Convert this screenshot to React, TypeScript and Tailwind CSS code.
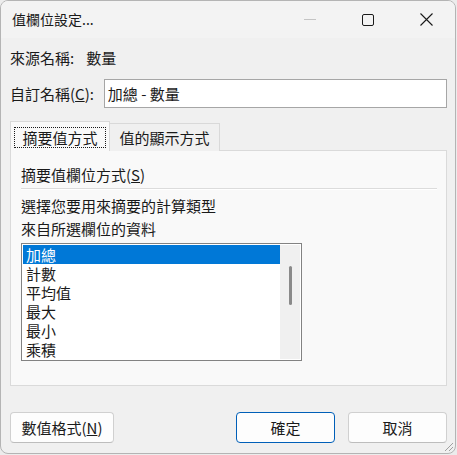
import React from "react";

const font = { fontFamily: '"Noto Sans CJK TC", "Noto Sans", sans-serif' };

export default function App() {
  const items = ["加總", "計數", "平均值", "最大", "最小", "乘積"];
  return (
    <div className="w-[457px] h-[455px] bg-[#ececec] overflow-hidden" style={font}>
      <div className="relative w-[456px] h-[454px] rounded-[8px] border border-[#b4b4b4] bg-[#f0f0f0] flex flex-col text-[#1a1a1a] overflow-hidden">
        {/* Title bar */}
        <div className="h-[37px] shrink-0 bg-[#f3f3f3] flex items-center">
          <div className="pl-[11px] text-[14px] leading-[19px]">值欄位設定...</div>
          <div className="ml-auto flex h-full">
            <div className="w-[58px] h-full flex items-center justify-center">
              <div className="w-[12px] h-px bg-[#c4c4c4]" />
            </div>
            <div className="w-[58px] h-full flex items-center justify-center">
              <div className="w-[12px] h-[12px] border border-[#1a1a1a] rounded-[2px]" />
            </div>
            <div className="w-[58px] h-full flex items-center justify-center">
              <svg width="13" height="13" viewBox="0 0 13 13">
                <path d="M0.5 0.5 L12.5 12.5 M12.5 0.5 L0.5 12.5" stroke="#1a1a1a" strokeWidth="1.1" />
              </svg>
            </div>
          </div>
        </div>

        {/* Content */}
        <div className="flex flex-col pl-[9px] pr-[8px] text-[15px]">
          <div className="mt-[10px] h-[19px] leading-[19px] flex">
            <span>來源名稱:</span>
            <span className="ml-[12px]">數量</span>
          </div>
          <div className="mt-[12px] flex items-center">
            <span className="leading-[19px] w-[94px]">
              自訂名稱(<span className="underline">C</span>):
            </span>
            <div className="w-[344px] h-[29px] border border-[#a6a6a6] bg-white flex items-center pl-[3px] leading-[19px]">
              加總 - 數量
            </div>
          </div>

          {/* Tabs */}
          <div className="mt-[13px] flex items-end h-[30px] relative z-10">
            <div className="w-[100px] h-[30px] bg-[#f9f9f9] border border-b-0 border-[#d9d9d9] p-[3px] pt-[5px]">
              <div className="w-full h-full border border-dotted border-[#1a1a1a] flex items-center justify-center leading-[19px]">
                摘要值方式
              </div>
            </div>
            <div className="w-[110px] h-[28px] bg-[#f0f0f0] border border-l-0 border-b-0 border-[#d9d9d9] flex items-center justify-center leading-[19px] pb-[1px]">
              值的顯示方式
            </div>
          </div>

          {/* Panel */}
          <div className="-mt-px w-[437px] h-[236px] bg-[#f9f9f9] border border-[#dadada] pl-[10px] pr-[9px] flex flex-col">
            <div className="mt-[14px] leading-[19px]">
              摘要值欄位方式(<span className="underline">S</span>)
            </div>
            <div className="mt-[4px] h-[2px] bg-[#dcdcdc] border-b border-white" />
            <div className="mt-[6px] leading-[19px]">選擇您要用來摘要的計算類型</div>
            <div className="mt-[4px] leading-[19px]">來自所選欄位的資料</div>
            <div className="mt-[5px] w-[281px] h-[118px] border border-[#828282] bg-white p-px flex">
              <div className="flex-1 flex flex-col">
                {items.map((it, i) => (
                  <div
                    key={it}
                    className={
                      "h-[19px] leading-[19px] pl-[3px] " +
                      (i === 0 ? "bg-[#0078d7] text-white" : "")
                    }
                  >
                    {it}
                  </div>
                ))}
              </div>
              <div className="w-[20px] h-full bg-[#f0f0f0] flex justify-center pt-[21px]">
                <div className="w-[3px] h-[39px] bg-[#8a8a8a] rounded-[2px] ml-[1px]" />
              </div>
            </div>
          </div>

          {/* Buttons */}
          <div className="mt-[26px] flex">
            <div className="w-[104px] h-[31px] rounded-[4px] border border-[#d0d0d0] border-b-[#bdbdbd] bg-[#fdfdfd] flex items-center justify-center leading-[19px]">
              數值格式(<span className="underline">N</span>)
            </div>
            <div className="ml-[122px] w-[99px] h-[31px] rounded-[4px] border border-[#005fb8] bg-[#fdfdfd] flex items-center justify-center leading-[19px]">
              確定
            </div>
            <div className="ml-[13px] w-[99px] h-[31px] rounded-[4px] border border-[#d0d0d0] border-b-[#bdbdbd] bg-[#fdfdfd] flex items-center justify-center leading-[19px]">
              取消
            </div>
          </div>
        </div>

        {/* Resize grip */}
        <svg className="absolute right-[1px] bottom-[1px]" width="12" height="12" viewBox="0 0 12 12">
          <path d="M11 3 L3 11 M11 7 L7 11" stroke="#a0a0a0" strokeWidth="1" />
        </svg>
      </div>
    </div>
  );
}
